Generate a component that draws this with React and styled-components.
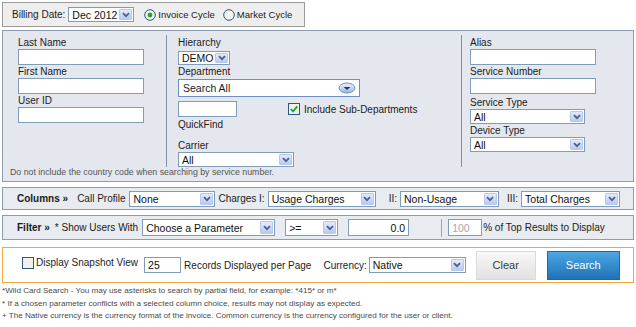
import styled, { createGlobalStyle } from 'styled-components'

const GlobalStyle = createGlobalStyle`
  * { box-sizing: border-box; }
  body {
    margin: 0;
    background: #ffffff;
    font-family: "Liberation Sans", Arial, sans-serif;
    font-size: 10px;
    color: #1b1b1b;
  }
`

const Page = styled.div`
  padding: 2px;
  display: flex;
  flex-direction: column;
  align-items: flex-start;
`

const DateBar = styled.div`
  width: 303px;
  height: 25px;
  border: 1px solid #9b9b9b;
  background: #eeeeee;
  display: flex;
  align-items: center;
  padding-left: 9px;
`

const Text = styled.span`
  font-size: ${p => p.$size || 10}px;
  font-weight: ${p => (p.$bold ? 'bold' : 'normal')};
  color: ${p => p.$color || '#1b1b1b'};
  margin-left: ${p => p.$ml || 0}px;
  white-space: nowrap;
  flex-shrink: 0;
`

const SelectBox = styled.div`
  width: ${p => p.$w}px;
  height: ${p => p.$h || 15}px;
  margin-left: ${p => p.$ml || 0}px;
  margin-top: ${p => p.$mt || 0}px;
  border: 1px solid #7f9db9;
  background: #ffffff;
  display: flex;
  align-items: center;
  padding-left: 3px;
  font-size: 10.5px;
  color: #111;
  flex-shrink: 0;
`

const SelectValue = styled.span`
  flex: 1;
  overflow: hidden;
  white-space: nowrap;
`

const ArrowBtn = styled.span`
  width: 13px;
  height: calc(100% - 2px);
  margin-right: 1px;
  border: 1px solid #b7c7ee;
  border-radius: 1px;
  background: linear-gradient(#e3eafd, #b8caf5);
  display: flex;
  align-items: center;
  justify-content: center;
  flex-shrink: 0;
`

const Field = styled.input`
  width: ${p => p.$w}px;
  height: ${p => p.$h || 16}px;
  margin-left: ${p => p.$ml || 0}px;
  border: 1px solid #7f9db9;
  background: #ffffff;
  padding: 0 3px;
  font-family: "Liberation Sans", Arial, sans-serif;
  font-size: 10.5px;
  color: ${p => (p.$muted ? '#a9a9a9' : '#111')};
  text-align: ${p => p.$align || 'left'};
  outline: none;
  flex-shrink: 0;
`

const Label = styled.div`
  line-height: 13px;
  font-size: 10px;
  margin-top: ${p => p.$mt || 0}px;
  white-space: nowrap;
`

const MainBox = styled.div`
  margin-top: 3px;
  width: 632px;
  border: 1px solid #8c9cb2;
  background: #e4e8ee;
  padding: 4px 0 3px 0;
`

const ColumnsRow = styled.div`
  display: flex;
  height: 132px;
`

const Col = styled.div`
  display: flex;
  flex-direction: column;
  align-items: flex-start;
  width: ${p => (p.$w ? `${p.$w}px` : 'auto')};
  flex: ${p => (p.$w ? 'none' : 1)};
  padding-left: ${p => p.$pl}px;
  padding-top: 1px;
  border-left: ${p => (p.$sep ? '1px solid #7f90a8' : 'none')};
`

const InlineRow = styled.div`
  display: flex;
  align-items: center;
  margin-top: ${p => p.$mt || 0}px;
`

const Note = styled.div`
  padding-left: 7px;
  font-size: 8.8px;
  line-height: 11px;
  color: #555;
`

const Combo = styled.div`
  width: 182px;
  height: 18px;
  margin-top: 1px;
  border: 1px solid #6b90c4;
  background: #ffffff;
  display: flex;
  align-items: center;
  justify-content: space-between;
  padding: 0 3px 0 4px;
  font-size: 10.5px;
`

const CheckWrap = styled.label`
  display: flex;
  align-items: center;
  gap: ${p => p.$gap || 4}px;
  margin-left: ${p => p.$ml || 0}px;
  margin-top: ${p => p.$mt || 0}px;
  align-self: ${p => p.$self || 'auto'};
  font-size: ${p => p.$size || 10}px;
  line-height: 13px;
  white-space: nowrap;
  flex-shrink: 0;
`

const Bar = styled.div`
  margin-top: ${p => p.$mt}px;
  width: 632px;
  height: ${p => p.$h}px;
  border: 1px solid #8c9cb2;
  background: #e8ebef;
  display: flex;
  align-items: center;
  padding-left: 14px;
`

const VSep = styled.span`
  width: 1px;
  height: 18px;
  margin-left: ${p => p.$ml}px;
  background: #98a6ba;
  flex-shrink: 0;
`

const ActionBox = styled.div`
  margin-top: 7px;
  width: 632px;
  height: 36px;
  border: 1px solid #f3a53e;
  background: #ffffff;
  display: flex;
  align-items: center;
  padding-left: 19px;
`

const Button = styled.button`
  width: ${p => p.$w}px;
  height: 29px;
  margin-left: ${p => p.$ml}px;
  font-family: "Liberation Sans", Arial, sans-serif;
  font-size: 11px;
  cursor: pointer;
  border: 1px solid ${p => (p.$primary ? '#1c6aa8' : '#dadada')};
  background: ${p => (p.$primary
    ? 'linear-gradient(#4ca7e2, #1f72b6)'
    : 'linear-gradient(#f8f8f8, #e1e1e1)')};
  color: ${p => (p.$primary ? '#ffffff' : '#3a3a3a')};
  flex-shrink: 0;
`

const Footnotes = styled.div`
  margin-top: 2px;
  font-size: 8.1px;
  line-height: 12.5px;
  color: #4a4a4a;
`

function Chevron() {
  return (
    <svg width="8" height="6" viewBox="0 0 8 6">
      <path d="M1 1.2 L4 4.2 L7 1.2" fill="none" stroke="#4d6185" strokeWidth="1.8" />
    </svg>
  )
}

function Select({ value, w, h, ml, mt }) {
  return (
    <SelectBox $w={w} $h={h} $ml={ml} $mt={mt}>
      <SelectValue>{value}</SelectValue>
      <ArrowBtn><Chevron /></ArrowBtn>
    </SelectBox>
  )
}

function Radio({ checked }) {
  return (
    <svg width="12" height="12" viewBox="0 0 12 12">
      <circle cx="6" cy="6" r="5.3" fill="#f3f3ef" stroke="#2a5885" strokeWidth="1" />
      {checked && <circle cx="6" cy="6" r="2.4" fill="#27a52b" />}
    </svg>
  )
}

function Checkbox({ checked }) {
  return (
    <svg width="12" height="12" viewBox="0 0 12 12">
      <rect x="0.5" y="0.5" width="11" height="11" fill="#f1f1ec" stroke="#2a5885" />
      {checked && (
        <path d="M2.8 6 L5 8.3 L9.3 3.4" fill="none" stroke="#22a424" strokeWidth="1.8" />
      )}
    </svg>
  )
}

function ComboIcon() {
  return (
    <svg width="18" height="12" viewBox="0 0 18 12">
      <defs>
        <linearGradient id="cmb" x1="0" y1="0" x2="0" y2="1">
          <stop offset="0" stopColor="#eef4fc" />
          <stop offset="1" stopColor="#98b7e2" />
        </linearGradient>
      </defs>
      <ellipse cx="9" cy="6" rx="8" ry="5" fill="url(#cmb)" stroke="#6b90c4" />
      <path d="M5.5 5 L12.5 5 L9 8 Z" fill="#2b3a55" />
    </svg>
  )
}

export default function App() {
  return (
    <Page>
      <GlobalStyle />

      <DateBar>
        <Text>Billing Date:</Text>
        <Select value="Dec 2012" w={66} h={15} ml={3} />
        <CheckWrap $ml={10} $gap={2} $size={9.5}><Radio checked />Invoice Cycle</CheckWrap>
        <CheckWrap $ml={8} $gap={2} $size={9.5}><Radio />Market Cycle</CheckWrap>
      </DateBar>

      <MainBox>
        <ColumnsRow>
          <Col $w={163} $pl={15}>
            <Label>Last Name</Label>
            <Field $w={126} readOnly />
            <Label>First Name</Label>
            <Field $w={126} readOnly />
            <Label>User ID</Label>
            <Field $w={126} readOnly />
          </Col>
          <Col $w={295} $pl={11} $sep>
            <Label>Hierarchy</Label>
            <Select value="DEMO" w={52} h={14} mt={2} />
            <Label>Department</Label>
            <Combo>Search All<ComboIcon /></Combo>
            <InlineRow $mt={4}>
              <Field $w={59} readOnly />
              <CheckWrap $ml={51}><Checkbox checked />Include Sub-Departments</CheckWrap>
            </InlineRow>
            <Label $mt={1}>QuickFind</Label>
            <Label $mt={8}>Carrier</Label>
            <Select value="All" w={116} h={15} />
          </Col>
          <Col $pl={8} $sep>
            <Label>Alias</Label>
            <Field $w={126} readOnly />
            <Label>Service Number</Label>
            <Field $w={126} readOnly />
            <Label $mt={2}>Service Type</Label>
            <Select value="All" w={115} h={15} />
            <Label>Device Type</Label>
            <Select value="All" w={115} h={15} />
          </Col>
        </ColumnsRow>
        <Note>Do not include the country code when searching by service number.</Note>
      </MainBox>

      <Bar $mt={5} $h={23}>
        <Text $bold>Columns »</Text>
        <Text $ml={9}>Call Profile</Text>
        <Select value="None" w={86} h={16} ml={4} />
        <Text $ml={3}>Charges I:</Text>
        <Select value="Usage Charges" w={108} h={16} ml={3} />
        <Text $ml={13}>II:</Text>
        <Select value="Non-Usage" w={99} h={16} ml={3} />
        <Text $ml={8}>III:</Text>
        <Select value="Total Charges" w={99} h={16} ml={3} />
      </Bar>

      <Bar $mt={5} $h={25}>
        <Text $bold>Filter »</Text>
        <Text $ml={5}>* Show Users With</Text>
        <Select value="Choose a Parameter" w={133} h={17} ml={4} />
        <Select value=">=" w={53} h={17} ml={10} />
        <Field $w={61} $h={17} $ml={10} $align="right" defaultValue="0.0" readOnly />
        <VSep $ml={32} />
        <Field $w={34} $h={17} $ml={6} $muted defaultValue="100" readOnly />
        <Text $ml={1}>% of Top Results to Display</Text>
      </Bar>

      <ActionBox>
        <CheckWrap $self="flex-start" $mt={8} $gap={2}><Checkbox />Display Snapshot View</CheckWrap>
        <Field $w={37} $h={16} $ml={6} defaultValue="25" readOnly />
        <Text $ml={3}>Records Displayed per Page</Text>
        <Text $ml={12}>Currency:</Text>
        <Select value="Native" w={97} h={16} ml={2} />
        <Button $w={60} $ml={10}>Clear</Button>
        <Button $w={73} $ml={11} $primary>Search</Button>
      </ActionBox>

      <Footnotes>
        <div>*Wild Card Search - You may use asterisks to search by partial field, for example: *415* or m*</div>
        <div>* If a chosen parameter conflicts with a selected column choice, results may not display as expected.</div>
        <div>+ The Native currency is the currency format of the invoice. Common currency is the currency configured for the user or client.</div>
      </Footnotes>
    </Page>
  )
}
